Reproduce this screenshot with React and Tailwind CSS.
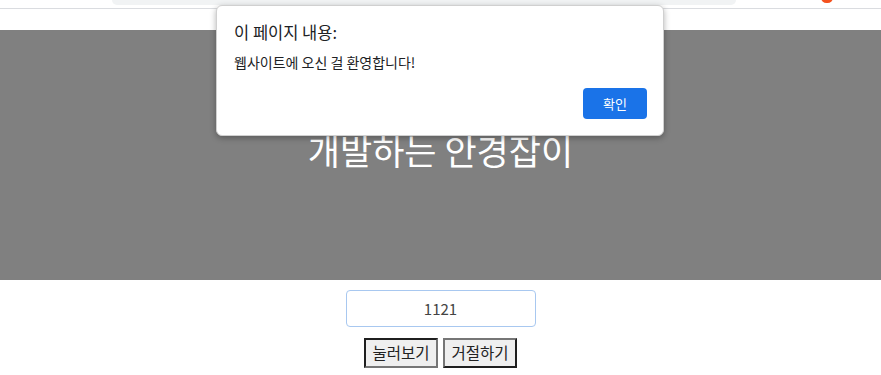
import React from 'react';

const ko = { fontFamily: '"Noto Sans CJK KR", "Noto Sans", sans-serif' };

export default function App() {
  return (
    <div className="relative w-[881px] h-[375px] bg-white overflow-hidden" style={ko}>
      {/* browser strip */}
      <div className="h-[30px] bg-white">
        <div className="relative h-[9px] border-b border-[#dadce0]">
          <div className="ml-[112px] w-[624px] h-[5px] bg-[#f1f3f4] rounded-b-[10px]" />
          <div className="absolute left-[821px] top-[-8px] w-[12px] h-[11px] rounded-full bg-[#f4511e]" />
        </div>
      </div>

      {/* hero */}
      <div className="h-[250px] bg-[#808080] flex items-center justify-center">
        <h1 className="text-[35px] text-white font-normal leading-none mb-[12px]">개발하는 안경잡이</h1>
      </div>

      {/* form */}
      <div className="flex flex-col items-center pt-[10px]">
        <input
          readOnly
          value="1121"
          className="w-[190px] h-[37px] rounded-[4px] border border-[#a8c8f0] text-center text-[15px] text-[#444] outline-none"
          style={ko}
        />
        <div className="flex gap-[5px] mt-[11px]">
          <button className="w-[74px] h-[30px] bg-[#efefef] border-2 border-solid border-t-[#1f1f1f] border-l-[#1f1f1f] border-r-[#767676] border-b-[#767676] text-[15.5px] text-[#222] leading-none">
            눌러보기
          </button>
          <button className="w-[74px] h-[30px] bg-[#efefef] border-2 border-solid border-t-[#767676] border-l-[#767676] border-r-[#1f1f1f] border-b-[#1f1f1f] text-[15.5px] text-[#222] leading-none">
            거절하기
          </button>
        </div>
      </div>

      {/* alert dialog */}
      <div className="absolute left-[216px] top-[5px] w-[448px] h-[131px] bg-white rounded-[6px] border border-[#d0d0d0] shadow-[0_2px_6px_rgba(0,0,0,0.3)]">
        <div className="pl-[17px] pt-[14px] text-[16.5px] text-[#202124] leading-[24px]">이 페이지 내용:</div>
        <div className="pl-[17px] pt-[9px] text-[14px] text-[#202124] leading-[18px]">웹사이트에 오신 걸 환영합니다!</div>
        <div className="flex justify-end pr-[16px] pt-[17px]">
          <button className="w-[64px] h-[31px] rounded-[4px] bg-[#1a73e8] text-white text-[13px]">확인</button>
        </div>
      </div>
    </div>
  );
}
